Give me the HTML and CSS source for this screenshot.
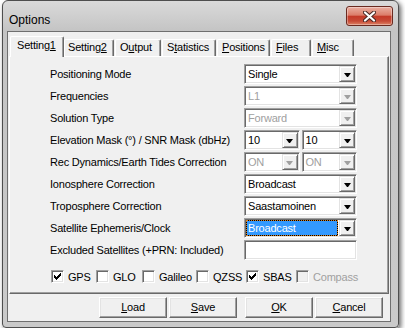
FILE: index.html
```html
<!DOCTYPE html>
<html lang="en">
<head>
	<meta charset="UTF-8">
	<meta name="viewport" content="width=device-width, initial-scale=1.0">
	<title>Options</title>
	<link rel="stylesheet" href="styles.css">
</head>
<body>
	<div class="window">
		<div class="titlebar">
			<span class="title">Options</span>
			<span class="close">
				<svg width="13" height="11" viewBox="0 0 13 11">
					<path d="M2 1.5L11 9.5M11 1.5L2 9.5" stroke="#4a2a26" stroke-width="4.2" stroke-linecap="round"/>
					<path d="M2 1.5L11 9.5M11 1.5L2 9.5" stroke="#fff" stroke-width="2.2" stroke-linecap="round"/>
				</svg>
			</span>
		</div>

		<div class="client">
			<div class="tabs">
				<div class="tab active tab-setting1">Setting<u>1</u></div>
				<div class="tab tab-setting2">Setting<u>2</u></div>
				<div class="tab tab-output">O<u>u</u>tput</div>
				<div class="tab tab-statistics">S<u>t</u>atistics</div>
				<div class="tab tab-positions"><u>P</u>ositions</div>
				<div class="tab tab-files"><u>F</u>iles</div>
				<div class="tab tab-misc"><u>M</u>isc</div>
			</div>

			<div class="page">
				<div class="form">
					<label>Positioning Mode</label>
					<div class="combo"><span class="value">Single</span><span class="drop"><i></i></span></div>

					<label>Frequencies</label>
					<div class="combo disabled"><span class="value">L1</span><span class="drop"><i></i></span></div>

					<label>Solution Type</label>
					<div class="combo disabled"><span class="value">Forward</span><span class="drop"><i></i></span></div>

					<label>Elevation Mask (°) / SNR Mask (dbHz)</label>
					<div class="pair">
						<div class="combo"><span class="value">10</span><span class="drop"><i></i></span></div>
						<div class="combo"><span class="value">10</span><span class="drop"><i></i></span></div>
					</div>

					<label>Rec Dynamics/Earth Tides Correction</label>
					<div class="pair">
						<div class="combo disabled"><span class="value">ON</span><span class="drop"><i></i></span></div>
						<div class="combo disabled"><span class="value">ON</span><span class="drop"><i></i></span></div>
					</div>

					<label>Ionosphere Correction</label>
					<div class="combo"><span class="value">Broadcast</span><span class="drop"><i></i></span></div>

					<label>Troposphere Correction</label>
					<div class="combo"><span class="value">Saastamoinen</span><span class="drop"><i></i></span></div>

					<label>Satellite Ephemeris/Clock</label>
					<div class="combo"><span class="value selected">Broadcast</span><span class="drop"><i></i></span></div>

					<label>Excluded Satellites (+PRN: Included)</label>
					<div class="edit"></div>
				</div>

				<div class="systems">
					<div class="sys"><span class="check on"><svg width="7" height="7" viewBox="0 0 7 7"><path d="M0 2h1v3h-1zM1 3h1v3h-1zM2 4h1v3h-1zM3 3h1v3h-1zM4 2h1v3h-1zM5 1h1v3h-1zM6 0h1v3h-1z"/></svg></span>GPS</div>
					<div class="sys"><span class="check"></span>GLO</div>
					<div class="sys"><span class="check"></span>Galileo</div>
					<div class="sys"><span class="check"></span>QZSS</div>
					<div class="sys"><span class="check on"><svg width="7" height="7" viewBox="0 0 7 7"><path d="M0 2h1v3h-1zM1 3h1v3h-1zM2 4h1v3h-1zM3 3h1v3h-1zM4 2h1v3h-1zM5 1h1v3h-1zM6 0h1v3h-1z"/></svg></span>SBAS</div>
					<div class="sys disabled"><span class="check"></span>Compass</div>
				</div>
			</div>

			<div class="buttons">
				<div class="btn"><u>L</u>oad</div>
				<div class="btn"><u>S</u>ave</div>
				<div class="btn btn-ok"><u>O</u>K</div>
				<div class="btn"><u>C</u>ancel</div>
			</div>
		</div>
	</div>
</body>
</html>
```

FILE: styles.css
```css
/* Page */
body {
	margin: 0;
	background: #fff;
	font-family: "Liberation Sans", Arial, sans-serif;
	font-size: 11px;
	letter-spacing: -0.2px;
	color: #000;
}

/* Window frame */
.window {
	box-sizing: border-box;
	width: 397px;
	height: 328px;
	margin-left: 2px;
	padding: 0 7px 5px 4px;
	border: 1px solid #4e4e4e;
	border-radius: 6px 6px 4px 4px;
	background: linear-gradient(#dadada, #c4c4c4 30px, #cacaca);
	box-shadow: 2px 2px 5px rgba(0, 0, 0, .6);
}

.titlebar {
	display: flex;
	justify-content: space-between;
	align-items: flex-start;
	height: 30px;
}

.title {
	padding: 12px 0 0 2px;
	font-size: 12px;
	line-height: 14px;
	letter-spacing: 0;
}

.close {
	box-sizing: border-box;
	display: flex;
	align-items: center;
	justify-content: center;
	width: 47px;
	height: 20px;
	margin: 5px -2px 0 0;
	border: 1px solid #6a2a20;
	border-radius: 3px;
	background: linear-gradient(#eab0a2, #dc7d69 45%, #c43a28 52%, #c74a36 78%, #dd8466);
	box-shadow: inset 0 0 0 1px rgba(255, 255, 255, .35);
}

/* Client area */
.client {
	box-sizing: border-box;
	height: 291px;
	border: 1px solid #6f6f6f;
	background: #f0f0f0;
}

/* Tabs */
.tabs {
	display: flex;
	align-items: flex-end;
	height: 24px;
	padding-left: 2px;
}

.tab {
	box-sizing: border-box;
	height: 17px;
	margin-left: 1px;
	padding: 1px 0 0 4px;
	border: 1px solid;
	border-bottom: none;
	border-color: #fff #696969 #fff #fff;
	border-radius: 2px 2px 0 0;
	box-shadow: inset -1px 0 #a0a0a0;
	line-height: 13px;
	white-space: nowrap;
}

.tab.active {
	position: relative;
	z-index: 1;
	height: 21px;
	margin: 0 0 -1px 0;
	padding: 2px 0 0 6px;
	background: #f0f0f0;
}

.tab-setting1 { width: 54px; }
.tab-setting2 { width: 50px; margin-left: 0; padding-left: 3px; }
.tab-output { width: 46px; }
.tab-statistics { width: 54px; }
.tab-positions { width: 53px; }
.tab-files { width: 40px; }
.tab-misc { width: 42px; }

/* Tab page */
.page {
	box-sizing: border-box;
	height: 238px;
	margin: 0 1px;
	padding: 7px 0 0 40px;
	border: 1px solid;
	border-color: #fff #696969 #696969 #fff;
	box-shadow: inset -1px -1px #a0a0a0;
}

.form {
	display: grid;
	grid-template-columns: 194px 113px;
	grid-auto-rows: 20px;
	row-gap: 2px;
	align-items: center;
}

.form label {
	white-space: nowrap;
}

.pair {
	display: flex;
	gap: 2px;
}

.pair .combo {
	flex: 1;
}

/* Combo boxes and edits (sunken) */
.combo,
.edit {
	box-sizing: border-box;
	height: 20px;
	padding: 1px;
	border: 1px solid;
	border-color: #a0a0a0 #fff #fff #a0a0a0;
	box-shadow: inset 1px 1px #696969, inset -1px -1px #e3e3e3;
	background: #fff;
}

.combo {
	display: flex;
}

.combo .value {
	flex: 1;
	padding-left: 2px;
	line-height: 16px;
	white-space: nowrap;
	overflow: hidden;
}

.combo .value.selected {
	box-sizing: border-box;
	margin-right: 1px;
	padding-left: 1px;
	line-height: 14px;
	border: 1px dotted #d88020;
	background: linear-gradient(#3399ff, #3399ff) padding-box, #000;
	color: #fff;
}

.combo .drop {
	box-sizing: border-box;
	display: flex;
	align-items: center;
	justify-content: center;
	width: 16px;
	height: 16px;
	border: 1px solid;
	border-color: #e3e3e3 #696969 #696969 #e3e3e3;
	box-shadow: inset 1px 1px #fff, inset -1px -1px #a0a0a0;
	background: #f0f0f0;
}

.combo .drop i {
	width: 1px;
	height: 0;
	margin-top: 1px;
	border-top: 4px solid #000;
	border-left: 3px solid transparent;
	border-right: 3px solid transparent;
}

.combo.disabled .value {
	color: #a0a0a0;
}

.combo.disabled .drop i {
	border-top-color: #a0a0a0;
}

/* Navigation systems */
.systems {
	display: grid;
	grid-template-columns: 45px 46px 54px 50px 50px auto;
	margin: 10px 0 0 1px;
}

.sys {
	display: flex;
	align-items: center;
	gap: 4px;
	height: 13px;
	white-space: nowrap;
}

.sys.disabled {
	color: #a0a0a0;
}

.check {
	box-sizing: border-box;
	display: flex;
	align-items: center;
	justify-content: center;
	width: 13px;
	height: 13px;
	border: 1px solid;
	border-color: #a0a0a0 #fff #fff #a0a0a0;
	box-shadow: inset 1px 1px #696969, inset -1px -1px #e3e3e3;
	background: #fff;
}

.check svg {
	shape-rendering: crispEdges;
}

.sys.disabled .check {
	background: #f0f0f0;
}

/* Buttons */
.buttons {
	display: flex;
	gap: 2px;
	padding: 3px 0 0 91px;
}

.btn {
	box-sizing: border-box;
	width: 68px;
	height: 21px;
	border: 1px solid;
	border-color: #fff #696969 #696969 #fff;
	box-shadow: inset -1px -1px #a0a0a0, inset 1px 1px #e3e3e3;
	background: #f0f0f0;
	text-align: center;
	line-height: 19px;
}

.btn-ok {
	margin-left: 6px;
}
```
